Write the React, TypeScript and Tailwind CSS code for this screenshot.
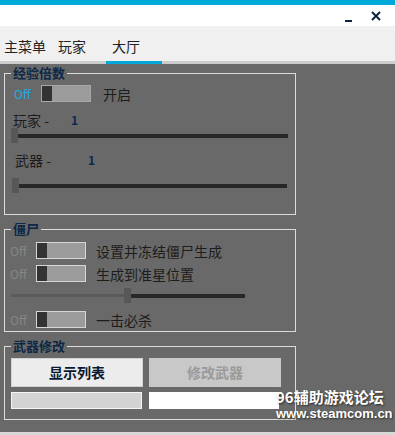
import React from 'react';

const font = { fontFamily: '"Noto Sans CJK SC", "Noto Sans", sans-serif' };

const Toggle = ({ on, label, cyan = false, dim = false }: { on?: boolean; label: string; cyan?: boolean; dim?: boolean }) => (
  <div className="flex items-center h-[17px]">
    <span className={`text-[12px] leading-none ${cyan ? 'w-[27px] text-[#12b0e4]' : 'w-[26px] text-[#858585]'}`}>Off</span>
    <div className={`flex h-[17px] w-[50px] border ${dim ? 'border-[#a8a8a8]' : 'border-[#d6d6d6]'} bg-[#9b9b9b]`}>
      <div className="w-[10px] h-full bg-[#333333]" />
    </div>
    <span className={`text-[14px] text-[#1c1c1c] leading-none ${on ? 'ml-[12px]' : 'ml-[10px]'}`}>{label}</span>
  </div>
);

const Group = ({ title, className, children }: { title: string; className: string; children: React.ReactNode }) => (
  <div className={`relative ml-[4px] w-[292px] border border-[#dcdcdc] ${className}`}>
    <span className="absolute left-[6px] top-[-10px] px-[2px] bg-[#696969] text-[13px] font-bold leading-[18px] text-[#0d2746]">
      {title}
    </span>
    {children}
  </div>
);

export default function App() {
  return (
    <div className="w-[395px] h-[435px] bg-[#696969] flex flex-col overflow-hidden" style={font}>
      <div className="h-[5px] bg-[#00aad8]" />
      <div className="h-[21px] bg-white flex items-center justify-end">
        <svg width="10" height="10" viewBox="0 0 10 10" className="mr-[16px] mt-[4px]">
          <rect x="1" y="7" width="7" height="2" fill="#0d2440" />
        </svg>
        <svg width="12" height="12" viewBox="0 0 12 12" className="mr-[13px]">
          <path d="M2 2 L10 10 M10 2 L2 10" stroke="#0d2440" strokeWidth="2" />
        </svg>
      </div>
      <div className="h-[35px] bg-[#f0f0f0] flex items-center pt-[6px] text-[14px] text-[#222222]">
        <span className="ml-[4px]">主菜单</span>
        <span className="ml-[12px]">玩家</span>
        <span className="ml-[26px]">大厅</span>
      </div>
      <div className="h-[3px] bg-[#cccccc] flex">
        <div className="ml-[106px] w-[56px] bg-[#00a8d8]" />
      </div>

      <Group title="经验倍数" className="mt-[9px] h-[142px]">
        <div className="mt-[11px] ml-[9px]">
          <Toggle on label="开启" cyan dim />
        </div>
        <div className="mt-[10px] ml-[8px] flex items-center h-[16px] text-[14px] text-[#1c1c1c]">
          <span>玩家 -</span>
          <span className="ml-[22px] text-[12px] font-bold text-[#0b2a52]">1</span>
        </div>
        <div className="ml-[6px] flex items-center h-[15px]">
          <div className="w-[7px] h-[15px] bg-[#575757]" />
          <div className="w-[270px] h-[4px] bg-[#272727]" />
        </div>
        <div className="mt-[9px] ml-[10px] flex items-center h-[16px] text-[14px] text-[#1c1c1c]">
          <span>武器 -</span>
          <span className="ml-[37px] text-[12px] font-bold text-[#0b2a52]">1</span>
        </div>
        <div className="mt-[10px] ml-[7px] flex items-center h-[15px]">
          <div className="w-[7px] h-[15px] bg-[#575757]" />
          <div className="w-[268px] h-[4px] bg-[#272727]" />
        </div>
      </Group>

      <Group title="僵尸" className="mt-[14px] h-[103px]">
        <div className="mt-[12px] ml-[5px] flex flex-col gap-[6px]">
          <Toggle label="设置并冻结僵尸生成" />
          <Toggle label="生成到准星位置" />
        </div>
        <div className="mt-[6px] ml-[6px] flex items-center h-[15px]">
          <div className="w-[113px] h-[3px] bg-[#5a5a5a]" />
          <div className="w-[7px] h-[15px] bg-[#575757]" />
          <div className="w-[114px] h-[4px] bg-[#272727]" />
        </div>
        <div className="mt-[8px] ml-[5px]">
          <Toggle label="一击必杀" />
        </div>
      </Group>

      <Group title="武器修改" className="mt-[14px] h-[74px]">
        <div className="mt-[11px] ml-[6px] flex gap-[6px]">
          <button className="w-[132px] h-[29px] bg-[#ececec] border border-[#d2d2d2] text-[14px] font-bold text-[#0a1a30]">
            显示列表
          </button>
          <button className="w-[132px] h-[29px] bg-[#c8c8c8] text-[14px] font-bold text-[#9a9a9a]">修改武器</button>
        </div>
        <div className="mt-[5px] ml-[6px] flex gap-[7px]">
          <div className="w-[131px] h-[17px] bg-[#d3d3d3] border border-[#f4f4f4]" />
          <div className="w-[130px] h-[17px] bg-white" />
        </div>
      </Group>

      <div className="absolute left-[276px] top-[388px] flex flex-col text-white font-bold [text-shadow:1px_1px_2px_rgba(0,0,0,0.6)]">
        <span className="text-[15px] leading-[18px]">96辅助游戏论坛</span>
        <span className="text-[13px] leading-[15px]" style={{ fontFamily: '"Liberation Sans", Arial, sans-serif' }}>
          www.steamcom.cn
        </span>
      </div>
      <div className="mt-auto h-[3px] bg-[#d8d8d8]" />
    </div>
  );
}
